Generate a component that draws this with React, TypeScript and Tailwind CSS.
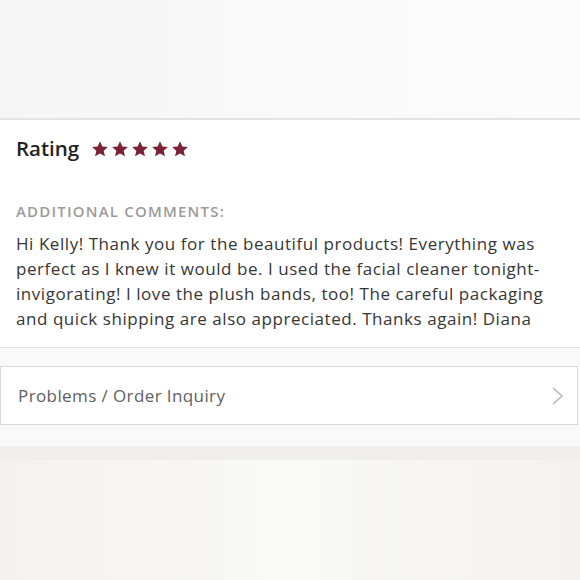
function Star() {
  return (
    <svg viewBox="0 0 24 24" className="w-[18px] h-[18px]" fill="#7a2133">
      <path d="M12 1.8l3.1 6.9 7.4.7-5.6 5 1.7 7.4L12 17.9l-6.6 3.9 1.7-7.4-5.6-5 7.4-.7z" />
    </svg>
  );
}

export default function App() {
  const comment =
    'Hi Kelly! Thank you for the beautiful products! Everything was perfect as I knew it would be. I used the facial cleaner tonight- invigorating! I love the plush bands, too! The careful packaging and quick shipping are also appreciated. Thanks again! Diana';

  return (
    <div className="w-[580px] h-[580px] overflow-hidden bg-[#f8f7f7] font-['Open_Sans',sans-serif]">
      <div className="h-[118px] bg-gradient-to-r from-[#f7f6f6] to-[#fcfcfc]" />
      <div className="bg-white border-t-2 border-[#e6e2e2] border-b border-b-[#eaded8]">
        <div className="h-[57px] flex items-center gap-[12px] px-[16px]">
          <h2 className="text-[20.5px] font-semibold text-[#222]">Rating</h2>
          <div className="flex gap-[2px]">
            <Star />
            <Star />
            <Star />
            <Star />
            <Star />
          </div>
        </div>
        <div className="pl-[16px] pr-[26px] pt-[24px] pb-[16px]">
          <p className="text-[15px] leading-[20px] font-semibold tracking-[0.08em] uppercase text-[#9c9a99]">
            Additional Comments:
          </p>
          <p className="mt-[10px] text-[17px] leading-[25px] tracking-[0.55px] text-[#363636]">{comment}</p>
        </div>
      </div>
      <div className="bg-[#f9f9f9] pt-[18px] pb-[21px]">
        <div className="h-[59px] bg-white border border-[#d9d9d9] mr-[2px] flex items-center justify-between pl-[17px] pr-[12px]">
          <span className="text-[17px] tracking-[0.4px] text-[#606060]">Problems / Order Inquiry</span>
          <svg viewBox="0 0 14 20" className="w-[14px] h-[20px]" fill="none" stroke="#b8b8b8" strokeWidth="1.6">
            <path d="M2 2l9 8-9 8" />
          </svg>
        </div>
      </div>
      <div className="h-[14px] bg-[#f0efee]" />
      <div className="h-[140px] bg-gradient-to-r from-[#f4f3f1] via-[#f9f9f8] to-[#f4f3f1]" />
    </div>
  );
}
